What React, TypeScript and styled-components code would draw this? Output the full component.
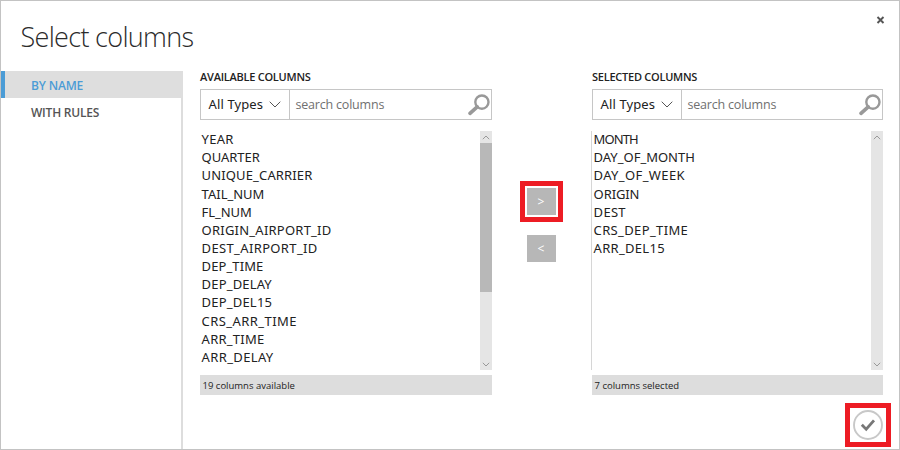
import React from "react";
import styled, { createGlobalStyle } from "styled-components";

const GlobalStyle = createGlobalStyle`
  * { box-sizing: border-box; }
  body { margin: 0; background: #fff; }
`;

const Dialog = styled.main`
  width: 900px;
  height: 450px;
  border: 1px solid #c3c3c3;
  background: #fff;
  display: flex;
  flex-direction: column;
  overflow: hidden;
  font-family: "Open Sans", sans-serif;
  color: #222;
`;

const Header = styled.header`
  height: 70px;
  flex: none;
  display: flex;
  justify-content: space-between;
  padding: 14px 14px 0 19.5px;
`;

const Title = styled.h1`
  margin: 0;
  font-size: 27px;
  line-height: 44px;
  font-weight: 300;
  letter-spacing: -0.68px;
  color: #2b2b2b;
  white-space: nowrap;
`;

const CloseButton = styled.button`
  width: 9px;
  height: 9px;
  padding: 0;
  border: 0;
  background: none;
  display: flex;
`;

const Body = styled.div`
  flex: 1;
  display: flex;
  min-height: 0;
`;

const Sidebar = styled.nav`
  width: 182px;
  flex: none;
  background: linear-gradient(to left, #ddd 2px, transparent 2px);
`;

const NavItem = styled.div<{ $active?: boolean }>`
  height: 27px;
  line-height: 30px;
  padding-left: ${(p) => (p.$active ? 26 : 30)}px;
  border-left: ${(p) => (p.$active ? "4px solid #4b9cd6" : "0")};
  background: ${(p) => (p.$active ? "#dedede" : "transparent")};
  color: ${(p) => (p.$active ? "#4b9cd6" : "#555")};
  font-size: 12px;
  font-weight: 600;
`;

const Tracked = styled.span<{ $spacing: number }>`
  letter-spacing: ${(p) => p.$spacing}px;
  white-space: nowrap;
`;

const Content = styled.div`
  flex: 1;
  display: grid;
  grid-template-columns: 292px 100px 291px 1fr;
  grid-template-rows: 324px 1fr;
  padding-left: 17px;
`;

const Panel = styled.section`
  display: flex;
  flex-direction: column;
`;

const PanelTitle = styled.h2`
  margin: 0;
  height: 18px;
  line-height: 11px;
  font-size: 11px;
  font-weight: 600;
  color: #222;
`;

const FilterBar = styled.div`
  height: 31px;
  flex: none;
  display: flex;
  border: 1px solid #c6c6c6;
`;

const TypeSelect = styled.div`
  width: 89px;
  border-right: 1px solid #c6c6c6;
  padding: 0 8px 0 7.5px;
  display: flex;
  align-items: center;
  justify-content: space-between;
  font: 13px/29px "Noto Sans", sans-serif;
`;

const SearchBox = styled.div`
  flex: 1;
  padding: 0 1px 0 5.5px;
  display: flex;
  align-items: center;
  justify-content: space-between;
  font-size: 12.5px;
  color: #707070;
`;

const ListBox = styled.div<{ $outlined?: boolean }>`
  height: 239px;
  margin: 11px 0 5px ${(p) => (p.$outlined ? -1 : 0)}px;
  border-left: ${(p) => (p.$outlined ? "1px solid #d6d6d6" : "0")};
  display: flex;
  justify-content: space-between;
`;

const List = styled.ul`
  margin: -0.8px 0 0;
  padding: 0 0 0 1.6px;
  list-style: none;
  font: 13px/18.15px "Noto Sans", sans-serif;
  color: #222;
`;

const ListItem = styled.li`
  height: 18.15px;
`;

const ScrollTrack = styled.div`
  width: 12px;
  background: #e5e5e5;
  display: flex;
  flex-direction: column;
  justify-content: space-between;
`;

const ScrollArrow = styled.div`
  height: 12px;
  display: flex;
  align-items: center;
  justify-content: center;
`;

const ScrollThumb = styled.div`
  height: 149px;
  margin-bottom: auto;
  background: #b8b8b8;
`;

const Status = styled.div`
  height: 20px;
  padding-left: 2.5px;
  background: #ddd;
  font-size: 9.5px;
  line-height: 21px;
  color: #222;
`;

const Transfer = styled.div`
  padding: 110px 2px 0 0;
  display: flex;
  flex-direction: column;
  align-items: center;
  gap: 13px;
`;

const Highlight = styled.div<{ $width: number; $height: number }>`
  width: ${(p) => p.$width}px;
  height: ${(p) => p.$height}px;
  border: 5px solid #ed1c24;
  display: flex;
  align-items: center;
  justify-content: center;
`;

const MoveButton = styled.button`
  width: 29px;
  height: 27px;
  padding: 0;
  border: 0;
  background: #b7b7b7;
  color: #fff;
  font: 12px/27px "Open Sans", sans-serif;
`;

const Footer = styled.footer`
  grid-column: 1 / -1;
  display: flex;
  justify-content: flex-end;
  padding: 8px 8px 0 0;
`;

const ConfirmButton = styled.button`
  width: 30px;
  height: 30px;
  padding: 0;
  border: 0;
  background: none;
  display: flex;
`;

const CloseIcon = () => (
  <svg width="9" height="9" viewBox="0 0 9 9">
    <path d="M1.5 2 7.5 8M7.5 2 1.5 8" stroke="#555" strokeWidth="1.9" />
  </svg>
);

const Chevron = () => (
  <svg width="12" height="7" viewBox="0 0 12 7">
    <path d="M.7.7 6 6 11.3.7" fill="none" stroke="#555" />
  </svg>
);

const SearchIcon = () => (
  <svg width="22" height="22" viewBox="0 0 22 22">
    <circle cx="13.9" cy="8.1" r="6.6" fill="none" stroke="#999" strokeWidth="2.4" />
    <path d="M9.2 12.8 2 19.4" stroke="#999" strokeWidth="3.6" strokeLinecap="round" />
  </svg>
);

const ScrollChevron = ({ up }: { up?: boolean }) => (
  <svg width="8" height="5" viewBox="0 0 8 5">
    <path d={up ? "M.8 4.2 4 1 7.2 4.2" : "M.8.8 4 4 7.2.8"} fill="none" stroke="#999" />
  </svg>
);

const CheckIcon = () => (
  <svg width="30" height="30" viewBox="0 0 30 30">
    <circle cx="15" cy="15" r="14" fill="none" stroke="#c8c8c8" strokeWidth="1.9" />
    <path d="M8.8 14.8 13.2 19.2 21 10.4" fill="none" stroke="#777" strokeWidth="2.8" />
  </svg>
);

type Entry = [name: string, spacing: number];

const available: Entry[] = [
  ["YEAR", 0.25],
  ["QUARTER", -0.05],
  ["UNIQUE_CARRIER", 0.14],
  ["TAIL_NUM", 0],
  ["FL_NUM", -0.08],
  ["ORIGIN_AIRPORT_ID", 0.23],
  ["DEST_AIRPORT_ID", 0.36],
  ["DEP_TIME", 0.1],
  ["DEP_DELAY", 0.17],
  ["DEP_DEL15", 0.2],
  ["CRS_ARR_TIME", 0.43],
  ["ARR_TIME", 0.24],
  ["ARR_DELAY", 0.37],
];

const selected: Entry[] = [
  ["MONTH", -0.9],
  ["DAY_OF_MONTH", 0],
  ["DAY_OF_WEEK", 0.38],
  ["ORIGIN", -0.1],
  ["DEST", 0.3],
  ["CRS_DEP_TIME", 0.36],
  ["ARR_DEL15", 0.3],
];

interface ColumnPanelProps {
  title: string;
  items: Entry[];
  status: string;
  outlined?: boolean;
  scrollable?: boolean;
}

const ColumnPanel = ({ title, items, status, outlined, scrollable }: ColumnPanelProps) => (
  <Panel>
    <PanelTitle><Tracked $spacing={-0.25}>{title}</Tracked></PanelTitle>
    <FilterBar>
      <TypeSelect><Tracked $spacing={0.12}>All Types</Tracked><Chevron /></TypeSelect>
      <SearchBox><Tracked $spacing={-0.2}>search columns</Tracked><SearchIcon /></SearchBox>
    </FilterBar>
    <ListBox $outlined={outlined}>
      <List>
        {items.map(([name, spacing]) => (
          <ListItem key={name}><Tracked $spacing={spacing}>{name}</Tracked></ListItem>
        ))}
      </List>
      <ScrollTrack>
        <ScrollArrow><ScrollChevron up /></ScrollArrow>
        {scrollable && <ScrollThumb />}
        <ScrollArrow><ScrollChevron /></ScrollArrow>
      </ScrollTrack>
    </ListBox>
    <Status>{status}</Status>
  </Panel>
);

export default function App() {
  return (
    <>
      <GlobalStyle />
      <Dialog>
        <Header>
          <Title>Select columns</Title>
          <CloseButton aria-label="Close"><CloseIcon /></CloseButton>
        </Header>
        <Body>
          <Sidebar>
            <NavItem $active><Tracked $spacing={-0.15}>BY NAME</Tracked></NavItem>
            <NavItem><Tracked $spacing={-0.22}>WITH RULES</Tracked></NavItem>
          </Sidebar>
          <Content>
            <ColumnPanel title="AVAILABLE COLUMNS" items={available} status="19 columns available" scrollable />
            <Transfer>
              <Highlight $width={43} $height={41}><MoveButton>&gt;</MoveButton></Highlight>
              <MoveButton>&lt;</MoveButton>
            </Transfer>
            <ColumnPanel title="SELECTED COLUMNS" items={selected} status="7 columns selected" outlined />
            <Footer>
              <Highlight $width={46} $height={44}>
                <ConfirmButton aria-label="Confirm"><CheckIcon /></ConfirmButton>
              </Highlight>
            </Footer>
          </Content>
        </Body>
      </Dialog>
    </>
  );
}
